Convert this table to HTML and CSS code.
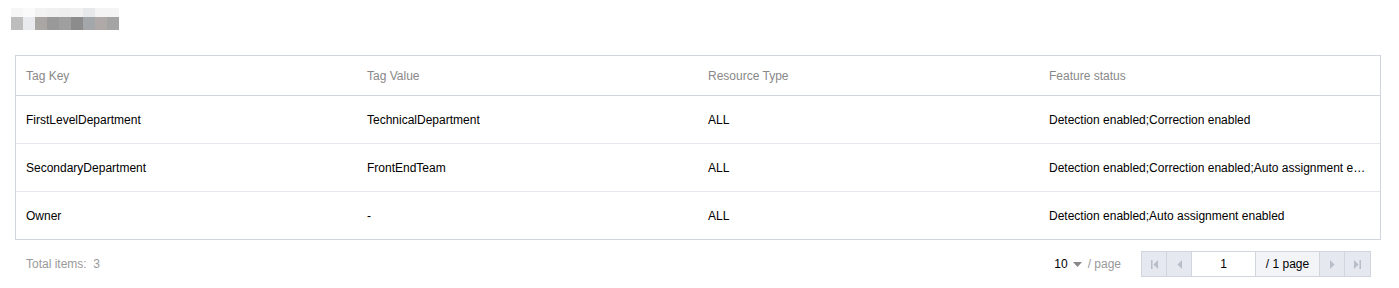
FILE: index.html
```html
<!DOCTYPE html>
<html>
<head>
<meta charset="utf-8">
<link rel="stylesheet" href="styles.css">
</head>
<body>
<div class="page">
  <div class="title" aria-hidden="true">
    <div class="px c1"><i></i><b></b></div>
    <div class="px c2"><i></i><b></b></div>
    <div class="px c3"><i></i><b></b></div>
    <div class="px c4"><i></i><b></b></div>
    <div class="px c5"><i></i><b></b></div>
    <div class="px c6"><i></i><b></b></div>
    <div class="px c7"><i></i><b></b></div>
    <div class="px c8"><i></i><b></b></div>
    <div class="px c9"><i></i><b></b></div>
  </div>

  <div class="table">
    <div class="row head">
      <div class="cell">Tag Key</div>
      <div class="cell">Tag Value</div>
      <div class="cell">Resource Type</div>
      <div class="cell">Feature status</div>
    </div>
    <div class="row">
      <div class="cell">FirstLevelDepartment</div>
      <div class="cell">TechnicalDepartment</div>
      <div class="cell">ALL</div>
      <div class="cell">Detection enabled;Correction enabled</div>
    </div>
    <div class="row">
      <div class="cell">SecondaryDepartment</div>
      <div class="cell">FrontEndTeam</div>
      <div class="cell">ALL</div>
      <div class="cell" title="Detection enabled;Correction enabled;Auto assignment enabled">Detection enabled;Correction enabled;Auto assignment e…</div>
    </div>
    <div class="row last">
      <div class="cell">Owner</div>
      <div class="cell">-</div>
      <div class="cell">ALL</div>
      <div class="cell">Detection enabled;Auto assignment enabled</div>
    </div>
  </div>

  <div class="footer">
    <div class="total">Total items:&nbsp; 3</div>
    <div class="pager">
      <div class="size">
        <span class="num">10</span>
        <svg class="caret" width="9" height="5" viewBox="0 0 9 5"><path d="M0 0h9L4.5 5z" fill="#888"/></svg>
        <span class="per">/ page</span>
      </div>
      <div class="pbox">
        <div class="btn"><svg width="7" height="9" viewBox="0 0 7 9"><rect x="0" y="0" width="1.5" height="9" fill="#b8bec8"/><path d="M7 0v9L2.5 4.5z" fill="#b8bec8"/></svg></div>
        <div class="btn"><svg width="5" height="9" viewBox="0 0 5 9"><path d="M5 0v9L0.5 4.5z" fill="#b8bec8"/></svg></div>
        <div class="input">1</div>
        <div class="pages">/ 1 page</div>
        <div class="btn"><svg width="5" height="9" viewBox="0 0 5 9"><path d="M0 0v9L4.5 4.5z" fill="#b8bec8"/></svg></div>
        <div class="btn"><svg width="7" height="9" viewBox="0 0 7 9"><path d="M0 0v9L4.5 4.5z" fill="#b8bec8"/><rect x="5.5" y="0" width="1.5" height="9" fill="#b8bec8"/></svg></div>
      </div>
    </div>
  </div>
</div>
</body>
</html>
```

FILE: styles.css
```css
* { box-sizing: border-box; }
html, body { margin: 0; padding: 0; background: #fff; }
body {
  font-family: "Liberation Sans", Arial, sans-serif;
  font-size: 12px;
  color: #000;
}
.page {
  padding: 8px 18px 0 15px;
}
.title {
  display: flex;
  margin-left: -4px;
  height: 22px;
  filter: blur(0.6px);
}
.px { display: flex; flex-direction: column; width: 12px; }
.px i { display: block; height: 9px; }
.px b { display: block; height: 13px; }
.c1 i { background: #f6f6f6; } .c1 b { background: #bdbdbd; }
.c2 i { background: #fafafa; } .c2 b { background: #e8eaed; }
.c3 i { background: #f2f2f2; } .c3 b { background: #aaa6a3; }
.c4 i { background: #f0f0f0; } .c4 b { background: #999999; }
.c5 i { background: #eeeeee; } .c5 b { background: #9f9f9f; }
.c6 i { background: #f0f0f0; } .c6 b { background: #8c8c8c; }
.c7 i { background: #e6e8e9; } .c7 b { background: #a3a7a9; }
.c8 i { background: #f4f4f4; } .c8 b { background: #afaaa8; }
.c9 i { background: #f4f4f4; } .c9 b { background: #a4a4a4; }

.table {
  margin-top: 25px;
  border: 1px solid #d1d5de;
}
.row {
  display: grid;
  grid-template-columns: repeat(4, 1fr);
  height: 48px;
  align-items: center;
  border-bottom: 1px solid #e5e8ee;
}
.row.head {
  height: 40px;
  color: #888;
  border-bottom: 1px solid #d1d5de;
}
.row.last { border-bottom: none; height: 47px; }
.cell {
  padding: 0 10px 0 10px;
  white-space: nowrap;
  overflow: hidden;
  line-height: 16px;
}
.footer {
  display: flex;
  justify-content: space-between;
  align-items: center;
  margin-top: 11px;
  padding-left: 11px;
  padding-right: 10px;
  height: 26px;
}
.total { color: #999; }
.pager { display: flex; align-items: center; }
.size {
  display: flex;
  align-items: center;
  margin-right: 20px;
}
.num { color: #000; }
.caret { margin: 1px 6px 0 5px; }
.per { color: #999; }
.pbox {
  display: flex;
  height: 26px;
  border: 1px solid #d1d5de;
}
.btn {
  width: 25px;
  display: flex;
  align-items: center;
  justify-content: center;
  background: #e5e8ee;
  border-right: 1px solid #d1d5de;
}
.btn:last-child { border-right: none; }
.input {
  width: 64px;
  background: #fff;
  border-right: 1px solid #d1d5de;
  display: flex;
  align-items: center;
  justify-content: center;
  color: #000;
}
.pages {
  width: 64px;
  background: #f2f4f7;
  border-right: 1px solid #d1d5de;
  display: flex;
  align-items: center;
  justify-content: center;
  color: #000;
}
```
